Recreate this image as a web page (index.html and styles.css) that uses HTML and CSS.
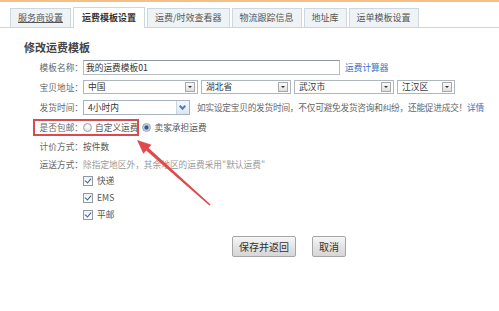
FILE: index.html
```html
<!DOCTYPE html>
<html lang="zh-CN">
<head>
    <meta charset="UTF-8">
    <meta name="viewport" content="width=device-width, initial-scale=1.0">
    <title>修改运费模板</title>
    <link rel="stylesheet" href="styles.css">
</head>
<body>
    <div class="topline"></div>
    <ul class="tabs">
        <li class="tab first">服务商设置</li>
        <li class="tab active">运费模板设置</li>
        <li class="tab">运费/时效查看器</li>
        <li class="tab">物流跟踪信息</li>
        <li class="tab">地址库</li>
        <li class="tab">运单模板设置</li>
    </ul>

    <div class="panel">
        <h2 class="title">修改运费模板</h2>

        <div class="row">
            <span class="label">模板名称：</span>
            <span class="text-input">我的运费模板01</span>
            <a class="link calc">运费计算器</a>
        </div>

        <div class="row">
            <span class="label">宝贝地址：</span>
            <span class="select w-country">中国<i class="arrow"></i></span>
            <span class="select w-prov">湖北省<i class="arrow"></i></span>
            <span class="select w-city">武汉市<i class="arrow"></i></span>
            <span class="select w-area">江汉区<i class="arrow"></i></span>
        </div>

        <div class="row">
            <span class="label">发货时间：</span>
            <span class="select select-blue">4小时内<i class="chevron"></i></span>
            <span class="hint">如实设定宝贝的发货时间，不仅可避免发货咨询和纠纷，还能促进成交！<a class="link">详情</a></span>
        </div>

        <div class="row">
            <span class="label">是否包邮：</span>
            <span class="radio"></span><span class="opt">自定义运费</span>
            <span class="radio checked"></span><span class="opt">卖家承担运费</span>
        </div>

        <div class="row row-text">
            <span class="label">计价方式：</span>
            <span>按件数</span>
        </div>

        <div class="row row-text short">
            <span class="label">运送方式：</span>
            <span class="muted">除指定地区外，其余地区的运费采用"默认运费"</span>
        </div>

        <div class="checks">
            <label class="check-row"><span class="checkbox"></span>快递</label>
            <label class="check-row"><span class="checkbox"></span>EMS</label>
            <label class="check-row"><span class="checkbox"></span>平邮</label>
        </div>

        <div class="actions">
            <button class="btn">保存并返回</button>
            <button class="btn">取消</button>
        </div>
    </div>

    <!-- annotation drawn over the form -->
    <div class="mark-box"></div>
    <svg class="mark-arrow" width="499" height="311" viewBox="0 0 499 311">
        <polygon points="137,140 151.4,144.8 148.6,147.9 210.6,204.4 209.4,205.6 146.2,150.6 143.4,153.8" fill="#e04a4d"/>
    </svg>
</body>
</html>
```

FILE: styles.css
```css
body {
    margin: 0;
    position: relative;
    background: #fff;
    color: #555;
    font-family: "Noto Sans CJK SC", "Liberation Sans", sans-serif;
    font-size: 8.7px;
    overflow: hidden;
}

.topline {
    height: 2px;
    background: #f2bf86;
}

.tabs {
    display: flex;
    align-items: flex-end;
    gap: 2px;
    height: 20px;
    margin: 5px 0 0;
    padding: 0 0 0 10px;
    list-style: none;
    border-bottom: 1px solid #c9d5df;
}
.tab {
    height: 18px;
    line-height: 18px;
    padding: 0 7px;
    font-size: 9px;
    color: #555;
    background: #eff3f6;
    border: 1px solid #cdd7e0;
    border-bottom: none;
}
.tab.first {
    text-decoration: underline;
}
.tab.active {
    height: 20px;
    line-height: 20px;
    margin-bottom: -1px;
    padding: 0 8px;
    color: #333;
    font-weight: bold;
    background: #fff;
}

.panel {
    padding-left: 24px;
}
.title {
    margin: 12px 0 3px;
    font-size: 11px;
    line-height: 14px;
    font-weight: bold;
    color: #444;
}

.row {
    display: flex;
    align-items: center;
    height: 20px;
    white-space: nowrap;
}
.row-text {
    height: 19px;
}
.row-text.short {
    height: 16px;
}
.label {
    width: 59px;
    flex: none;
    text-align: right;
    color: #666;
}

.text-input {
    box-sizing: border-box;
    width: 257px;
    height: 15px;
    line-height: 13px;
    padding-left: 2px;
    color: #333;
    border: 1px solid #b5bcc4;
    border-top-color: #8e969f;
}
.link {
    color: #3a6fc2;
}
.calc {
    margin-left: 5px;
}

.select {
    position: relative;
    box-sizing: border-box;
    height: 14px;
    line-height: 12px;
    margin-right: 3px;
    padding-left: 4px;
    color: #333;
    border: 1px solid #b0b6bd;
}
.w-country { width: 115px; }
.w-prov { width: 90px; }
.w-city { width: 100px; }
.w-area { width: 58px; }
.arrow {
    position: absolute;
    right: 2px;
    top: 1px;
    box-sizing: border-box;
    width: 10px;
    height: 10px;
    border: 1px solid #a8a8a8;
    background: linear-gradient(#fbfbfb, #dedede);
}
.arrow::after {
    content: "";
    position: absolute;
    left: 2px;
    top: 3px;
    border-left: 2px solid transparent;
    border-right: 2px solid transparent;
    border-top: 2px solid #333;
}
.select-blue {
    width: 107px;
    height: 15px;
    line-height: 13px;
    margin-right: 7px;
    border-color: #a9b3bd;
}
.chevron {
    position: absolute;
    right: 0;
    top: 0;
    width: 12px;
    height: 13px;
    background: linear-gradient(#f4f8fc, #dbe7f3);
    border-left: 1px solid #c9d6e3;
}
.chevron::after {
    content: "";
    position: absolute;
    left: 3px;
    top: 3px;
    width: 3px;
    height: 3px;
    border-right: 2px solid #4f7db8;
    border-bottom: 2px solid #4f7db8;
    transform: rotate(45deg);
}
.hint {
    color: #666;
    letter-spacing: -0.25px;
}

.radio {
    box-sizing: border-box;
    width: 9px;
    height: 9px;
    margin-right: 3px;
    border: 1px solid #9aa3ab;
    border-radius: 50%;
    background: radial-gradient(circle at 50% 40%, #fff, #d9dde1);
}
.radio.checked {
    margin-left: 4px;
    background: radial-gradient(circle, #34568f 0 1.5px, #b9c9dd 2.5px, #eef2f6);
}
.opt {
    color: #555;
}

.muted {
    color: #999;
}

.checks {
    padding-left: 59px;
}
.check-row {
    display: flex;
    align-items: center;
    height: 17px;
    color: #555;
}
.checkbox {
    position: relative;
    box-sizing: border-box;
    width: 10px;
    height: 10px;
    margin-right: 4px;
    border: 1px solid #8f9aa5;
    background: linear-gradient(#eef2f6, #fff);
}
.checkbox::after {
    content: "";
    position: absolute;
    left: 2px;
    top: 0;
    width: 3px;
    height: 5px;
    border-right: 1.5px solid #3b5f96;
    border-bottom: 1.5px solid #3b5f96;
    transform: rotate(40deg);
}

.actions {
    display: flex;
    gap: 16px;
    margin: 13px 0 0 208px;
}
.btn {
    height: 21px;
    padding: 0 6px;
    font-family: inherit;
    font-size: 10px;
    color: #333;
    border: 1px solid #a6a6a6;
    border-radius: 2px;
    background: linear-gradient(#f6f6f6, #e4e4e4 50%, #d6d6d6);
}

.mark-box {
    position: absolute;
    left: 33px;
    top: 119px;
    width: 102px;
    height: 13px;
    border: 2px solid #d94a52;
}
.mark-arrow {
    position: absolute;
    left: 0;
    top: 0;
}
```
